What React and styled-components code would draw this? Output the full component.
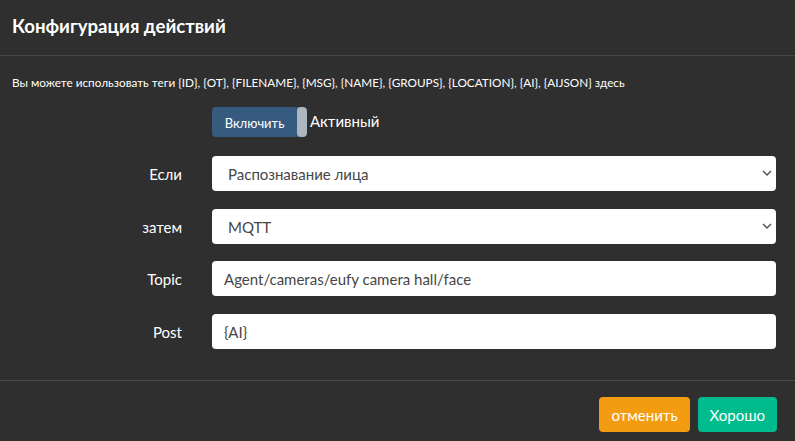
import styled, { createGlobalStyle } from 'styled-components'

const GlobalStyle = createGlobalStyle`
  html, body {
    margin: 0;
    padding: 0;
    background: #2f2f2f;
    font-family: Lato, "Open Sans", sans-serif;
  }
`

const Modal = styled.div`
  width: 795px;
  height: 441px;
  background: #2f2f2f;
  color: #ffffff;
  display: flex;
  flex-direction: column;
  overflow: hidden;
`

const Header = styled.div`
  height: 55px;
  display: flex;
  align-items: center;
  padding: 0 12px;
  border-bottom: 1px solid #464646;
`

const Title = styled.h4`
  margin: 0;
  font-size: 18.6px;
  font-weight: 700;
  position: relative;
  top: -2px;
`

const Body = styled.div`
  padding: 19px 19px 0 12px;
  height: 305px;
  border-bottom: 1px solid #464646;
`

const Hint = styled.p`
  margin: 0 0 17px 0;
  font-size: 11.75px;
  line-height: 15px;
`

const Row = styled.div`
  display: grid;
  grid-template-columns: 170px 1fr;
  column-gap: 30px;
  align-items: center;
  margin-bottom: ${({ $gap }) => $gap ?? 18}px;
`

const Label = styled.label`
  text-align: right;
  font-size: 15px;
  color: #ffffff;
`

const ToggleWrap = styled.div`
  display: flex;
  align-items: center;
  gap: 3px;
`

const Toggle = styled.div`
  width: 95px;
  height: 30px;
  border-radius: 4px;
  background: #375a7f;
  display: flex;
  align-items: stretch;
  overflow: hidden;
`

const ToggleText = styled.span`
  flex: 1;
  display: flex;
  align-items: center;
  justify-content: center;
  font-size: 13px;
  padding-top: 1px;
`

const Handle = styled.span`
  width: 10px;
  background: #adb5bd;
  border-radius: 4px;
`

const ToggleLabel = styled.span`
  font-size: 15px;
  position: relative;
  top: -1px;
`

const SelectBox = styled.div`
  position: relative;
  height: 35px;
  background: #ffffff;
  border-radius: 4px;
  display: flex;
  align-items: center;
  padding: 0 16px;
  color: #464646;
  font-size: 15px;
`

const Chevron = styled.svg`
  position: absolute;
  right: 4px;
  top: 13px;
`

const Input = styled.input`
  height: 35px;
  box-sizing: border-box;
  border: none;
  border-radius: 4px;
  background: #ffffff;
  padding: 0 12px;
  font-family: inherit;
  font-size: 15px;
  color: #464646;
  outline: none;
  width: 100%;
`

const Footer = styled.div`
  display: flex;
  justify-content: flex-end;
  align-items: center;
  gap: 8px;
  padding: 16px 18px 0 0;
`

const Button = styled.button`
  height: 35px;
  border: none;
  border-radius: 4px;
  padding: 0 12px;
  font-family: inherit;
  font-size: 15px;
  color: #ffffff;
  background: ${({ $variant }) => ($variant === 'ok' ? '#00bc8c' : '#f39c12')};
`

const Select = ({ value }) => (
  <SelectBox>
    {value}
    <Chevron width="10" height="8" viewBox="0 0 10 8">
      <path d="M1 2 L5 6 L9 2" fill="none" stroke="#555" strokeWidth="1.5" />
    </Chevron>
  </SelectBox>
)

const App = () => (
  <>
    <GlobalStyle />
    <Modal>
      <Header>
        <Title>Конфигурация действий</Title>
      </Header>
      <Body>
        <Hint>
          Вы можете использовать теги {'{ID}'}, {'{OT}'}, {'{FILENAME}'}, {'{MSG}'}, {'{NAME}'}, {'{GROUPS}'}, {'{LOCATION}'}, {'{AI}'}, {'{AIJSON}'} здесь
        </Hint>
        <Row $gap={19}>
          <span />
          <ToggleWrap>
            <Toggle>
              <ToggleText>Включить</ToggleText>
              <Handle />
            </Toggle>
            <ToggleLabel>Активный</ToggleLabel>
          </ToggleWrap>
        </Row>
        <Row>
          <Label>Если</Label>
          <Select value="Распознавание лица" />
        </Row>
        <Row $gap={17}>
          <Label>затем</Label>
          <Select value="MQTT" />
        </Row>
        <Row $gap={18}>
          <Label>Topic</Label>
          <Input defaultValue="Agent/cameras/eufy camera hall/face" />
        </Row>
        <Row>
          <Label>Post</Label>
          <Input defaultValue="{AI}" />
        </Row>
      </Body>
      <Footer>
        <Button>отменить</Button>
        <Button $variant="ok">Хорошо</Button>
      </Footer>
    </Modal>
  </>
)

export default App
